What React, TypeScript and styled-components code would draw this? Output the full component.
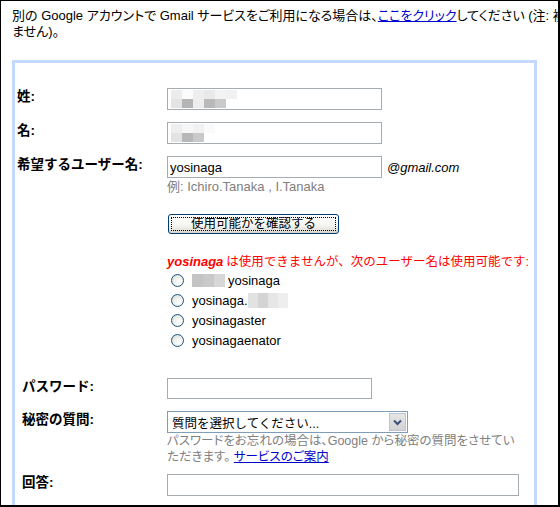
import React from "react";
import styled, { createGlobalStyle } from "styled-components";

const Global = createGlobalStyle`
  html, body { margin: 0; padding: 0; background: #fff; }
  body {
    font-family: "Liberation Sans", "Noto Sans CJK JP", sans-serif;
    font-size: 12.5px;
    color: #000;
  }
`;

const Frame = styled.div`
  width: 560px;
  height: 507px;
  box-sizing: border-box;
  border-style: solid;
  border-color: #000;
  border-width: 1px 2px 2px 1px;
  overflow: hidden;
  background: #fff;
  padding: 7px 0 0 11px;
`;

const Intro = styled.p`
  margin: 0;
  font-size: 13px;
  line-height: 16px;
  white-space: nowrap;
  font-feature-settings: "palt";
`;

const Link = styled.a`
  color: #0000cc;
  text-decoration: underline;
  cursor: pointer;
`;

const Box = styled.div`
  margin-top: 20px;
  width: 525px;
  height: 480px;
  box-sizing: border-box;
  border: 3px solid #c3d9ff;
  padding-top: 25px;
`;

const Row = styled.div<{ $top?: number }>`
  display: flex;
  align-items: flex-start;
  margin-top: ${(p) => p.$top ?? 0}px;
`;

const Label = styled.div<{ $indent: number }>`
  width: 152px;
  flex: none;
  box-sizing: border-box;
  padding-left: ${(p) => p.$indent}px;
  padding-top: 1px;
  font-weight: bold;
  font-size: 13.5px;
  line-height: 16px;
  white-space: nowrap;
`;

const Field = styled.div`
  display: flex;
  flex-direction: column;
  align-items: flex-start;
`;

const InputBox = styled.div<{ $w: number; $h?: number }>`
  width: ${(p) => p.$w}px;
  height: ${(p) => p.$h ?? 22}px;
  box-sizing: border-box;
  border: 1px solid #a5acb2;
  background: #fff;
  padding: 0 2px;
  display: flex;
  align-items: center;
  font-size: 13px;
`;

const UserLine = styled.div`
  display: flex;
  align-items: center;
`;

const Domain = styled.span`
  font-style: italic;
  font-size: 13px;
  margin-left: 5px;
`;

const Hint = styled.div`
  color: #808080;
  font-size: 13px;
  line-height: 16px;
  margin-top: 1px;
  white-space: nowrap;
`;

const CheckButton = styled.button`
  margin: 19px 0 0 1px;
  width: 171px;
  height: 20px;
  box-sizing: border-box;
  border: 1px solid #003c74;
  border-radius: 3px;
  background: linear-gradient(#ffffff 0%, #f6f6f2 55%, #e4e2da 85%, #d6d3ca 100%);
  font: inherit;
  color: #000;
  padding: 0;
  outline: 1px dotted #000;
  outline-offset: -4px;
  line-height: 16px;
`;

const Notice = styled.div`
  margin-top: 20px;
  color: #ff0000;
  line-height: 16px;
  white-space: nowrap;
`;

const Taken = styled.b`
  font-style: italic;
  font-size: 13px;
  margin-right: 3px;
`;

const RadioList = styled.div`
  display: flex;
  flex-direction: column;
`;

const RadioRow = styled.label`
  height: 20px;
  display: flex;
  align-items: center;
  font-size: 13px;
  white-space: nowrap;
`;

const Radio = styled.span`
  width: 13px;
  height: 13px;
  box-sizing: border-box;
  border-radius: 50%;
  border: 1px solid #1c5180;
  background: radial-gradient(circle at 65% 65%, #ffffff 0%, #f3f3ef 40%, #d5d5cd 100%);
  margin: 0 8px 0 4px;
  flex: none;
`;

const Mosaic = styled.span<{ $cols: number; $cw: number; $ch: number; $ml?: number; $mr?: number }>`
  display: inline-grid;
  grid-template-columns: repeat(${(p) => p.$cols}, ${(p) => p.$cw}px);
  grid-auto-rows: ${(p) => p.$ch}px;
  margin-left: ${(p) => p.$ml ?? 0}px;
  margin-right: ${(p) => p.$mr ?? 0}px;
  flex: none;
`;

const Cell = styled.span<{ $c: string }>`
  background: ${(p) => p.$c};
`;

const SelectBox = styled.div`
  width: 241px;
  height: 22px;
  box-sizing: border-box;
  border: 1px solid #7f9db9;
  background: #fff;
  display: flex;
  align-items: stretch;
`;

const SelectText = styled.span`
  flex: 1;
  padding-left: 4px;
  display: flex;
  align-items: center;
  white-space: nowrap;
`;

const DropButton = styled.span`
  width: 17px;
  margin: 1px;
  box-sizing: border-box;
  border: 1px solid #b9c4da;
  background: linear-gradient(#e6e6e6, #d2d2d2);
  display: flex;
  align-items: center;
  justify-content: center;
`;

const Help = styled.div`
  color: #808080;
  line-height: 16px;
  white-space: nowrap;
  font-feature-settings: "palt";
`;

type Blur = { cols: number; cw: number; ch: number; cells: string[]; ml?: number; mr?: number };

const Blurred = ({ b }: { b: Blur }) => (
  <Mosaic $cols={b.cols} $cw={b.cw} $ch={b.ch} $ml={b.ml} $mr={b.mr}>
    {b.cells.map((c, i) => (
      <Cell key={i} $c={c} />
    ))}
  </Mosaic>
);

const lastName: Blur = {
  cols: 6,
  cw: 11,
  ch: 9,
  ml: 1,
  cells: [
    "#ececec", "#fbfbfb", "#eeeeee", "#e9e9e9", "#f3f3f3", "#f1f1f1",
    "#e4e4e4", "#b5b5b5", "#eeeeee", "#b9b9b9", "#cacaca", "#ffffff",
  ],
};

const firstName: Blur = {
  cols: 4,
  cw: 11,
  ch: 9,
  ml: 1,
  cells: ["#eeeeee", "#f6f6f6", "#f1f1f1", "#fafafa", "#e3e3e3", "#b8b8b8", "#c9c9c9", "#ffffff"],
};

const prefix: Blur = { cols: 3, cw: 11, ch: 13, mr: 3, cells: ["#c4c4c4", "#c9c9c9", "#d7d7d7"] };
const suffix: Blur = { cols: 4, cw: 10, ch: 15, cells: ["#e2e2e2", "#d4d4d4", "#e6e6e6", "#eeeeee"] };

const Chevron = () => (
  <svg width="9" height="7" viewBox="0 0 9 7">
    <path d="M1 1.5 L4.5 5 L8 1.5" fill="none" stroke="#3b4f7a" strokeWidth="2" />
  </svg>
);

export default function App() {
  return (
    <>
      <Global />
      <Frame>
        <Intro>
          別の Google アカウントで Gmail サービスをご利用になる場合は、<Link>ここをクリック</Link>してください (注: 複数のアカウントを作成することはでき
          <br />
          ません)。
        </Intro>
        <Box>
          <Row>
            <Label $indent={2}>姓:</Label>
            <InputBox $w={215}>
              <Blurred b={lastName} />
            </InputBox>
          </Row>
          <Row $top={12}>
            <Label $indent={2}>名:</Label>
            <InputBox $w={215}>
              <Blurred b={firstName} />
            </InputBox>
          </Row>
          <Row $top={12}>
            <Label $indent={2}>希望するユーザー名:</Label>
            <Field>
              <UserLine>
                <InputBox $w={215}>yosinaga</InputBox>
                <Domain>@gmail.com</Domain>
              </UserLine>
              <Hint>例: Ichiro.Tanaka , I.Tanaka</Hint>
              <CheckButton type="button">使用可能かを確認する</CheckButton>
              <Notice>
                <Taken>yosinaga</Taken>は使用できませんが、次のユーザー名は使用可能です:
              </Notice>
              <RadioList>
                <RadioRow>
                  <Radio />
                  <Blurred b={prefix} />
                  yosinaga
                </RadioRow>
                <RadioRow>
                  <Radio />
                  yosinaga.
                  <Blurred b={suffix} />
                </RadioRow>
                <RadioRow>
                  <Radio />
                  yosinagaster
                </RadioRow>
                <RadioRow>
                  <Radio />
                  yosinagaenator
                </RadioRow>
              </RadioList>
            </Field>
          </Row>
          <Row $top={28}>
            <Label $indent={7}>パスワード:</Label>
            <InputBox $w={205} $h={21} />
          </Row>
          <Row $top={12}>
            <Label $indent={7}>秘密の質問:</Label>
            <Field>
              <SelectBox>
                <SelectText>質問を選択してください...</SelectText>
                <DropButton>
                  <Chevron />
                </DropButton>
              </SelectBox>
              <Help>
                パスワードをお忘れの場合は、Google から秘密の質問をさせてい
                <br />
                ただきます。 <Link>サービスのご案内</Link>
              </Help>
            </Field>
          </Row>
          <Row $top={9}>
            <Label $indent={7}>回答:</Label>
            <InputBox $w={352} />
          </Row>
        </Box>
      </Frame>
    </>
  );
}
